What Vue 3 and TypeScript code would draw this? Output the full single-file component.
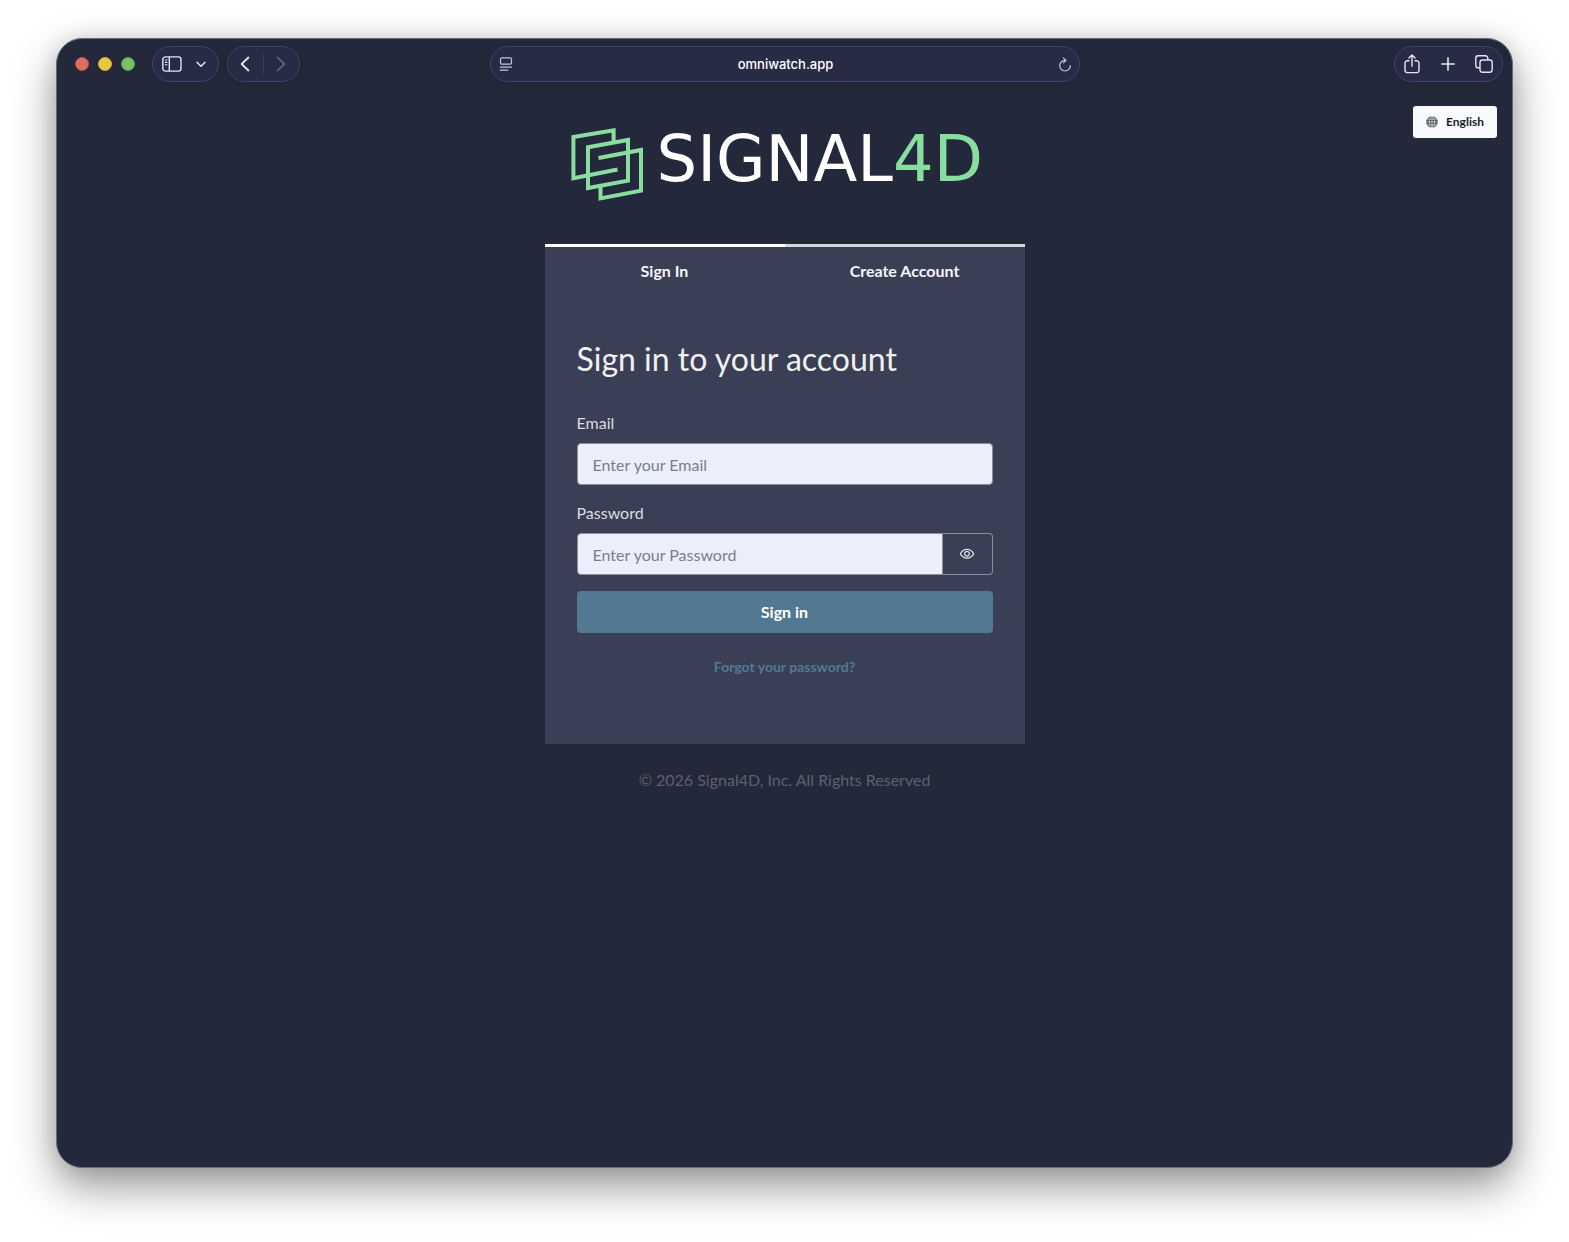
<script setup lang="ts">
import { ref } from 'vue'

type Tab = 'signIn' | 'signUp'

const tabs: { id: Tab; label: string }[] = [
  { id: 'signIn', label: 'Sign In' },
  { id: 'signUp', label: 'Create Account' },
]

const activeTab = ref<Tab>('signIn')
const email = ref('')
const password = ref('')
const showPassword = ref(false)
</script>

<template>
  <div class="desktop">
    <div class="window">
      <header class="toolbar">
        <div class="side">
          <div class="lights">
            <button class="light close" type="button" aria-label="Close"></button>
            <button class="light minimise" type="button" aria-label="Minimise"></button>
            <button class="light zoom" type="button" aria-label="Zoom"></button>
          </div>
          <div class="pill sidebar-pill">
            <button class="tool" type="button" aria-label="Sidebar">
              <svg width="20" height="16" viewBox="0 0 20 16" fill="none" stroke="currentColor" stroke-width="1.4">
                <rect x="0.8" y="0.9" width="18.2" height="14.2" rx="2.6" />
                <path d="M7.3 1v14" />
                <path d="M2.8 4h2.6M2.8 6.4h2.6M2.8 8.8h2.6" stroke-width="1.1" />
              </svg>
            </button>
            <button class="tool" type="button" aria-label="Tab groups">
              <svg width="10" height="7" viewBox="0 0 10 7" fill="none" stroke="currentColor" stroke-width="1.5" stroke-linecap="round" stroke-linejoin="round">
                <path d="M1 1.3l4 4 4-4" />
              </svg>
            </button>
          </div>
          <div class="pill history-pill">
            <button class="tool" type="button" aria-label="Back">
              <svg width="10" height="16" viewBox="0 0 10 16" fill="none" stroke="currentColor" stroke-width="1.8" stroke-linecap="round" stroke-linejoin="round">
                <path d="M8.4 1.5L1.6 8l6.8 6.5" />
              </svg>
            </button>
            <span class="divider"></span>
            <button class="tool dim" type="button" aria-label="Forward">
              <svg width="10" height="16" viewBox="0 0 10 16" fill="none" stroke="currentColor" stroke-width="1.7" stroke-linecap="round" stroke-linejoin="round">
                <path d="M1.6 1.5L8.4 8l-6.8 6.5" />
              </svg>
            </button>
          </div>
        </div>

        <div class="pill address">
          <button class="tool" type="button" aria-label="Page menu">
            <svg width="14" height="14" viewBox="0 0 14 14" fill="none" stroke="currentColor" stroke-width="1.2" stroke-linecap="round">
              <rect x="1.5" y="0.8" width="11" height="6.4" rx="1.4" />
              <path d="M1.4 10.2h11.2M1.4 13.2h7.4" />
            </svg>
          </button>
          <span class="host">omniwatch.app</span>
          <button class="tool" type="button" aria-label="Reload">
            <svg width="14" height="15" viewBox="0 0 14 15" fill="none" stroke="currentColor" stroke-width="1.2" stroke-linecap="round" stroke-linejoin="round">
              <path d="M7 3.4a5.3 5.3 0 1 0 5.3 5.3" />
              <path d="M5.400 0.900l2.600 2.500-2.600 2.500" />
            </svg>
          </button>
        </div>

        <div class="side end">
          <div class="pill actions">
            <button class="tool" type="button" aria-label="Share">
              <svg width="16" height="20" viewBox="0 0 16 20" fill="none" stroke="currentColor" stroke-width="1.4" stroke-linecap="round" stroke-linejoin="round">
                <path d="M5 6.8H3.4A2.4 2.4 0 0 0 1 9.2v7a2.4 2.4 0 0 0 2.4 2.4h9.2a2.4 2.4 0 0 0 2.4-2.4v-7a2.4 2.4 0 0 0-2.4-2.4H11" />
                <path d="M8 12.3V1.2M4.9 4.1L8 1.1l3.1 3" />
              </svg>
            </button>
            <button class="tool" type="button" aria-label="New tab">
              <svg width="14" height="14" viewBox="0 0 14 14" fill="none" stroke="currentColor" stroke-width="1.6" stroke-linecap="round">
                <path d="M7 0.8v12.4M0.8 7h12.4" />
              </svg>
            </button>
            <button class="tool" type="button" aria-label="Tab overview">
              <svg width="18" height="18" viewBox="0 0 18 18" fill="none" stroke="currentColor" stroke-width="1.4" stroke-linejoin="round">
                <rect x="5" y="5" width="12.2" height="12.2" rx="2.4" />
                <path d="M5 12.8H3.2A2.4 2.4 0 0 1 0.8 10.4V3.2A2.4 2.4 0 0 1 3.2 0.8h7.2a2.4 2.4 0 0 1 2.4 2.4V5" />
              </svg>
            </button>
          </div>
        </div>
      </header>

      <main class="page">
        <button class="language" type="button">
          <svg width="12" height="12" viewBox="0 0 12 12" fill="none">
            <circle cx="6" cy="6" r="5.8" fill="#4a4d53" />
            <path d="M6 0v12M0 6h12M1.2 3.1h9.6M1.2 8.9h9.6" stroke="#f8fafe" stroke-width="0.6" />
            <ellipse cx="6" cy="6" rx="2.7" ry="5.8" stroke="#f8fafe" stroke-width="0.6" />
          </svg>
          English
        </button>

        <div class="logo">
          <svg class="mark" width="74" height="76" viewBox="0 0 74 76" fill="none" stroke="#8adda0" stroke-width="4">
            <path d="M43.6 15V3.400L3.400 10v41.200L47.500 42.500" />
            <path d="M18 20.200L58 13v40.600L18 61z" />
            <path d="M28.500 31L71 23v40.600L30.500 71.400V59" />
          </svg>
          <span class="wordmark">SIGNAL<span class="accent">4D</span></span>
        </div>

        <section class="card">
          <div class="tabs" role="tablist">
            <button
              v-for="tab in tabs"
              :key="tab.id"
              class="tab"
              :class="{ active: tab.id === activeTab }"
              type="button"
              role="tab"
              :aria-selected="tab.id === activeTab"
              @click="activeTab = tab.id"
            >
              {{ tab.label }}
            </button>
          </div>

          <form class="form" @submit.prevent>
            <h1 class="title">Sign in to your account</h1>

            <div class="field">
              <label for="email">Email</label>
              <input id="email" v-model="email" class="control" type="email" placeholder="Enter your Email" />
            </div>

            <div class="field">
              <label for="password">Password</label>
              <div class="group">
                <input
                  id="password"
                  v-model="password"
                  class="control"
                  :type="showPassword ? 'text' : 'password'"
                  placeholder="Enter your Password"
                />
                <button class="reveal" type="button" aria-label="Show password" @click="showPassword = !showPassword">
                  <svg width="16" height="16" viewBox="0 0 24 24" fill="currentColor">
                    <path d="M12 6c3.79 0 7.17 2.13 8.82 5.5C19.17 14.87 15.79 17 12 17s-7.17-2.13-8.82-5.5C4.83 8.13 8.21 6 12 6zm0-2C7 4 2.73 7.11 1 11.5 2.73 15.89 7 19 12 19s9.27-3.11 11-7.5C21.27 7.11 17 4 12 4zm0 5c1.38 0 2.5 1.12 2.5 2.5S13.38 14 12 14s-2.5-1.12-2.5-2.5S10.62 9 12 9zm0-2c-2.48 0-4.5 2.02-4.5 4.5S9.52 16 12 16s4.5-2.02 4.5-4.5S14.48 7 12 7z" />
                  </svg>
                </button>
              </div>
            </div>

            <button class="submit" type="submit">Sign in</button>
            <a class="forgot" href="#">Forgot your password?</a>
          </form>
        </section>

        <footer class="copyright">© 2026 Signal4D, Inc. All Rights Reserved</footer>
      </main>
    </div>
  </div>
</template>

<style>
body {
  margin: 0;
  background: #fff;
}
</style>

<style scoped>
* {
  box-sizing: border-box;
}

button,
input {
  margin: 0;
  font: inherit;
}

button {
  padding: 0;
  border: 0;
  background: none;
  color: inherit;
  cursor: pointer;
}

svg {
  display: block;
  flex: none;
}

.desktop {
  display: flex;
  min-height: 100vh;
  padding: 38px 56px 74px;
  overflow: hidden;
  font-family: Lato, "Liberation Sans", sans-serif;
  font-size: 16px;
  line-height: 24px;
}

.window {
  display: flex;
  flex: 1;
  flex-direction: column;
  border: 1px solid #666a78;
  border-radius: 26px;
  background: #24283b;
  box-shadow: 0 18px 44px rgba(0, 0, 0, 0.42), 0 0 20px rgba(0, 0, 0, 0.1);
}

.toolbar {
  display: flex;
  align-items: center;
  gap: 16px;
  padding: 7px 9px;
  color: #e4e6ef;
}

.side {
  display: flex;
  flex: 1;
  align-items: center;
  gap: 8px;
}

.end {
  justify-content: flex-end;
}

.lights {
  display: flex;
  gap: 9px;
  margin: 0 9px;
}

.light {
  width: 14px;
  height: 14px;
  border: 1px solid #c8503f;
  border-radius: 50%;
  background: #dc6f62;
}

.minimise {
  border-color: #d3ae23;
  background: #e5c843;
}

.zoom {
  border-color: #57a343;
  background: #7cc065;
}

.pill {
  display: flex;
  align-items: center;
  height: 36px;
  border: 1px solid #3a4373;
  border-radius: 18px;
  background: #272b44;
  box-shadow: 0 4px 12px rgba(0, 0, 0, 0.08);
}

.tool {
  display: flex;
  align-items: center;
  justify-content: center;
}

.sidebar-pill {
  gap: 14px;
  width: 67px;
  padding: 0 9px;
}

.history-pill {
  justify-content: space-between;
  width: 73px;
  padding: 0 13px 0 12px;
}

.divider {
  width: 1px;
  height: 20px;
  background: #3a3f58;
}

.dim {
  color: #666a80;
}

.address {
  flex: 0 1 590px;
  justify-content: space-between;
  padding: 0 6px 0 8px;
}

.address .tool {
  color: #c5c8d6;
}

.host {
  color: #fff;
  font-family: Inter, "Liberation Sans", sans-serif;
  font-size: 13px;
  font-weight: 500;
}

.actions {
  justify-content: space-between;
  width: 109px;
  padding: 0 9px;
}

.page {
  position: relative;
  display: flex;
  flex: 1;
  flex-direction: column;
  align-items: center;
  padding: 38px 16px;
}

.language {
  position: absolute;
  top: 17px;
  right: 15px;
  display: flex;
  align-items: center;
  gap: 8px;
  height: 32px;
  padding: 0 13px;
  border-radius: 3px;
  background: #f8fafe;
  color: #17191f;
  font-size: 12px;
  font-weight: 700;
}

.logo {
  display: flex;
  gap: 13px;
  width: 430px;
  max-width: 100%;
  height: 76px;
}

.wordmark {
  color: #fff;
  font-family: "DejaVu Sans", sans-serif;
  font-size: 64px;
  line-height: 64px;
}

.accent {
  color: #8adda0;
}

.card {
  width: 480px;
  max-width: 100%;
  margin-top: 41px;
  background: #3b3f55;
}

.tabs {
  display: flex;
}

.tab {
  flex: 1;
  padding: 12px;
  border-top: 3px solid #d5d7db;
  color: #f4f5f8;
  font-weight: 700;
}

.tab.active {
  border-color: #fff;
}

.form {
  display: flex;
  flex-direction: column;
  gap: 16px;
  padding: 44px 32px 67px;
}

.title {
  margin: 0 0 16px;
  color: #f0f0f0;
  font-size: 32px;
  font-weight: 400;
  line-height: 40px;
}

.field {
  display: flex;
  flex-direction: column;
  gap: 8px;
  color: #dcdde0;
}

.group {
  display: flex;
}

.control {
  flex: 1;
  width: 100%;
  min-width: 0;
  min-height: 42px;
  padding: 9px 15px 7px;
  border: 1px solid #8a8e9c;
  border-radius: 4px;
  background: #ebeffc;
  color: #24283b;
}

.control::placeholder {
  color: #7b7e88;
  opacity: 1;
}

.group .control {
  border-radius: 4px 0 0 4px;
}

.reveal {
  display: flex;
  align-items: center;
  justify-content: center;
  width: 50px;
  border: 1px solid #8a8e9c;
  border-left: 0;
  border-radius: 0 4px 4px 0;
  color: #dcdde0;
}

.submit {
  height: 42px;
  border-radius: 4px;
  background: #527991;
  color: #fff;
  font-weight: 700;
}

.forgot {
  align-self: center;
  margin-top: 8px;
  color: #527991;
  font-size: 14px;
  font-weight: 700;
  line-height: 20px;
  text-decoration: none;
}

.copyright {
  margin-top: 24px;
  color: #5e616c;
}
</style>
